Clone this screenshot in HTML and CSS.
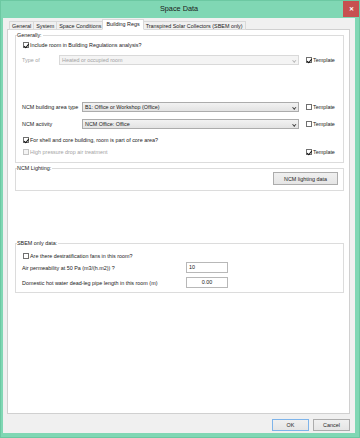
FILE: index.html
```html
<!DOCTYPE html>
<html lang="en">
<head>
  <meta charset="UTF-8" />
  <meta name="viewport" content="width=device-width, initial-scale=1.0" />
  <title>Space Data</title>
  <link rel="stylesheet" href="styles.css">
</head>
<body>
  <div class="window">
    <!-- Title bar -->
    <div class="titlebar">
      <span></span>
      <span class="title">Space Data</span>
      <span class="close">&#x2715;</span>
    </div>

    <div class="client">
      <!-- Tabs -->
      <div class="tabs">
        <div class="tab">General</div>
        <div class="tab">System</div>
        <div class="tab">Space Conditions</div>
        <div class="tab active">Building Regs</div>
        <div class="tab">Transpired Solar Collectors (SBEM only)</div>
      </div>

      <!-- Tab page -->
      <div class="panel">
        <div class="group generally">
          <span class="group-title">Generally:</span>

          <div class="row row-include">
            <label class="check"><span class="box checked"></span>Include room in Building Regulations analysis?</label>
          </div>

          <div class="row row-typeof">
            <span class="label disabled w-typeof">Type of</span>
            <div class="combo disabled">Heated or occupied room<span class="arrow"></span></div>
            <label class="check template"><span class="box checked"></span>Template</label>
          </div>

          <div class="row row-area">
            <span class="label w-ncm">NCM building area type</span>
            <div class="combo">B1: Office or Workshop (Office)<span class="arrow"></span></div>
            <label class="check template"><span class="box"></span>Template</label>
          </div>

          <div class="row row-activity">
            <span class="label w-ncm">NCM activity</span>
            <div class="combo">NCM Office: Office<span class="arrow"></span></div>
            <label class="check template"><span class="box"></span>Template</label>
          </div>

          <div class="row row-shell">
            <label class="check"><span class="box checked"></span>For shell and core building, room is part of core area?</label>
          </div>

          <div class="row row-pressure">
            <label class="check disabled grow"><span class="box"></span>High pressure drop air treatment</label>
            <label class="check template"><span class="box checked"></span>Template</label>
          </div>
        </div>

        <div class="group lighting">
          <span class="group-title">NCM Lighting:</span>
          <button class="btn btn-lighting">NCM lighting data</button>
        </div>

        <div class="group sbem">
          <span class="group-title">SBEM only data:</span>

          <div class="row row-destrat">
            <label class="check"><span class="box"></span>Are there destratification fans in this room?</label>
          </div>

          <div class="row row-perm">
            <span class="label w-sbem">Air permeability at 50 Pa (m3/(h.m2)) ?</span>
            <div class="field">10</div>
          </div>

          <div class="row row-pipe">
            <span class="label w-sbem">Domestic hot water dead-leg pipe length in this room (m)</span>
            <div class="field center">0.00</div>
          </div>
        </div>
      </div>

      <!-- Dialog buttons -->
      <div class="footer">
        <button class="btn btn-default">OK</button>
        <button class="btn">Cancel</button>
      </div>
    </div>
  </div>
</body>
</html>
```

FILE: styles.css
```css
/* Global */
* { box-sizing: border-box; margin: 0; padding: 0; }
body {
  font-family: 'Liberation Sans', Arial, sans-serif;
  font-size: 5.4px;
  color: #1a1a1a;
  background: #ffffff;
}
/* Window frame */
.window {
  width: 360px;
  height: 438px;
  background: #80d7b4;
  border: 1px solid #6cc8a2;
  display: flex;
  flex-direction: column;
  padding: 0 4px 4px 2px;
}
.titlebar {
  height: 17px;
  display: grid;
  grid-template-columns: 1fr auto 1fr;
  align-items: start;
}
.title {
  font-size: 7.3px;
  color: #1b1b1b;
  line-height: 16px;
}
.close {
  justify-self: end;
  width: 16px;
  height: 16px;
  margin-right: -4px;
  background: #c75050;
  color: #fff;
  font-size: 6px;
  font-weight: bold;
  line-height: 16px;
  text-align: center;
}
.client {
  flex: 1;
  background: #f0f0f0;
  display: flex;
  flex-direction: column;
  padding: 1px 5px 0 4px;
}
/* Tabs */
.tabs {
  display: flex;
  align-items: flex-end;
  padding-left: 2px;
  height: 11px;
  position: relative;
  z-index: 1;
  margin-bottom: -1px;
}
.tab {
  height: 9px;
  line-height: 8px;
  padding: 0 2px;
  border: 1px solid #d9d9d9;
  border-right: none;
  background: #f0f0f0;
  white-space: nowrap;
}
.tab:last-child { border-right: 1px solid #d9d9d9; }
.tab.active {
  height: 11px;
  line-height: 9px;
  padding: 0 3px;
  margin: 0 -1px;
  background: #ffffff;
  border: 1px solid #d9d9d9;
  border-bottom: 1px solid #ffffff;
  position: relative;
  z-index: 2;
}
.panel {
  flex: 1;
  background: #ffffff;
  border: 1px solid #d0d0d0;
  padding: 0 5px 0 7px;
}
/* Group boxes */
.group {
  position: relative;
  border: 1px solid #dcdcdc;
  padding: 0 5px 0 6px;
}
.group-title {
  position: absolute;
  top: -4px;
  left: 1px;
  background: #ffffff;
  padding-right: 1px;
  line-height: 7px;
}
.generally { margin-top: 5px; height: 128px; }
.lighting {
  margin-top: 5px;
  height: 23px;
  display: flex;
  justify-content: flex-end;
  padding-top: 3px;
}
.sbem { margin-top: 52px; height: 50px; }
/* Rows */
.row {
  display: flex;
  align-items: center;
  height: 8px;
}
.row-include { margin-top: 5px; }
.row-typeof { margin-top: 6px; height: 10px; }
.row-area { margin-top: 37px; height: 10px; }
.row-activity { margin-top: 7px; height: 10px; }
.row-shell { margin-top: 7px; }
.row-pressure { margin-top: 4px; }
.row-destrat { margin-top: 8px; }
.row-perm { margin-top: 2px; height: 11px; }
.row-pipe { margin-top: 4px; height: 11px; }
.label { white-space: nowrap; }
.w-typeof { width: 37px; }
.w-ncm { width: 60px; }
.w-sbem { width: 164px; }
.disabled { color: #a3a3a3; }
.grow { flex: 1; }
/* Checkboxes */
.check {
  display: flex;
  align-items: center;
  white-space: nowrap;
}
.box {
  width: 6px;
  height: 6px;
  margin: 0 1px 0 1px;
  border: 1px solid #707070;
  background: #ffffff;
  position: relative;
}
.check.disabled .box { border-color: #c4c4c4; background: #f4f4f4; }
.box.checked::after {
  content: "";
  position: absolute;
  left: 1.2px;
  top: -0.5px;
  width: 2px;
  height: 3.5px;
  border: solid #111;
  border-width: 0 1.2px 1.2px 0;
  transform: rotate(40deg);
}
.template {
  width: 32px;
  margin-left: 7px;
}
.template .box { margin-left: 0; }
/* Combo boxes */
.combo {
  flex: 1;
  height: 10px;
  line-height: 8px;
  padding-left: 2px;
  border: 1px solid #acacac;
  background: linear-gradient(#f2f2f2, #e3e3e3);
  position: relative;
  white-space: nowrap;
}
.combo.disabled {
  border-color: #d9d9d9;
  background: #f4f4f4;
}
.arrow {
  position: absolute;
  right: 3px;
  top: 2.5px;
  width: 2.5px;
  height: 2.5px;
  border: solid #404040;
  border-width: 0 1px 1px 0;
  transform: rotate(45deg);
}
.combo.disabled .arrow { border-color: #b8b8b8; }
/* Text fields */
.field {
  width: 42px;
  height: 11px;
  line-height: 9px;
  padding-left: 2px;
  border: 1px solid #b8b8b8;
  background: #ffffff;
}
.field.center { text-align: center; padding-left: 0; }
/* Buttons */
.btn {
  font-family: inherit;
  font-size: 5.4px;
  color: #1e1e1e;
  height: 12px;
  border: 1px solid #acacac;
  background: linear-gradient(#f0f0f0, #e5e5e5);
}
.btn-lighting { width: 65px; height: 13px; }
.footer {
  height: 19px;
  display: flex;
  justify-content: flex-end;
  align-items: flex-start;
  gap: 4px;
  padding-top: 5px;
}
.footer .btn { width: 37px; }
.btn-default { border-color: #7eb4ea; }
```
